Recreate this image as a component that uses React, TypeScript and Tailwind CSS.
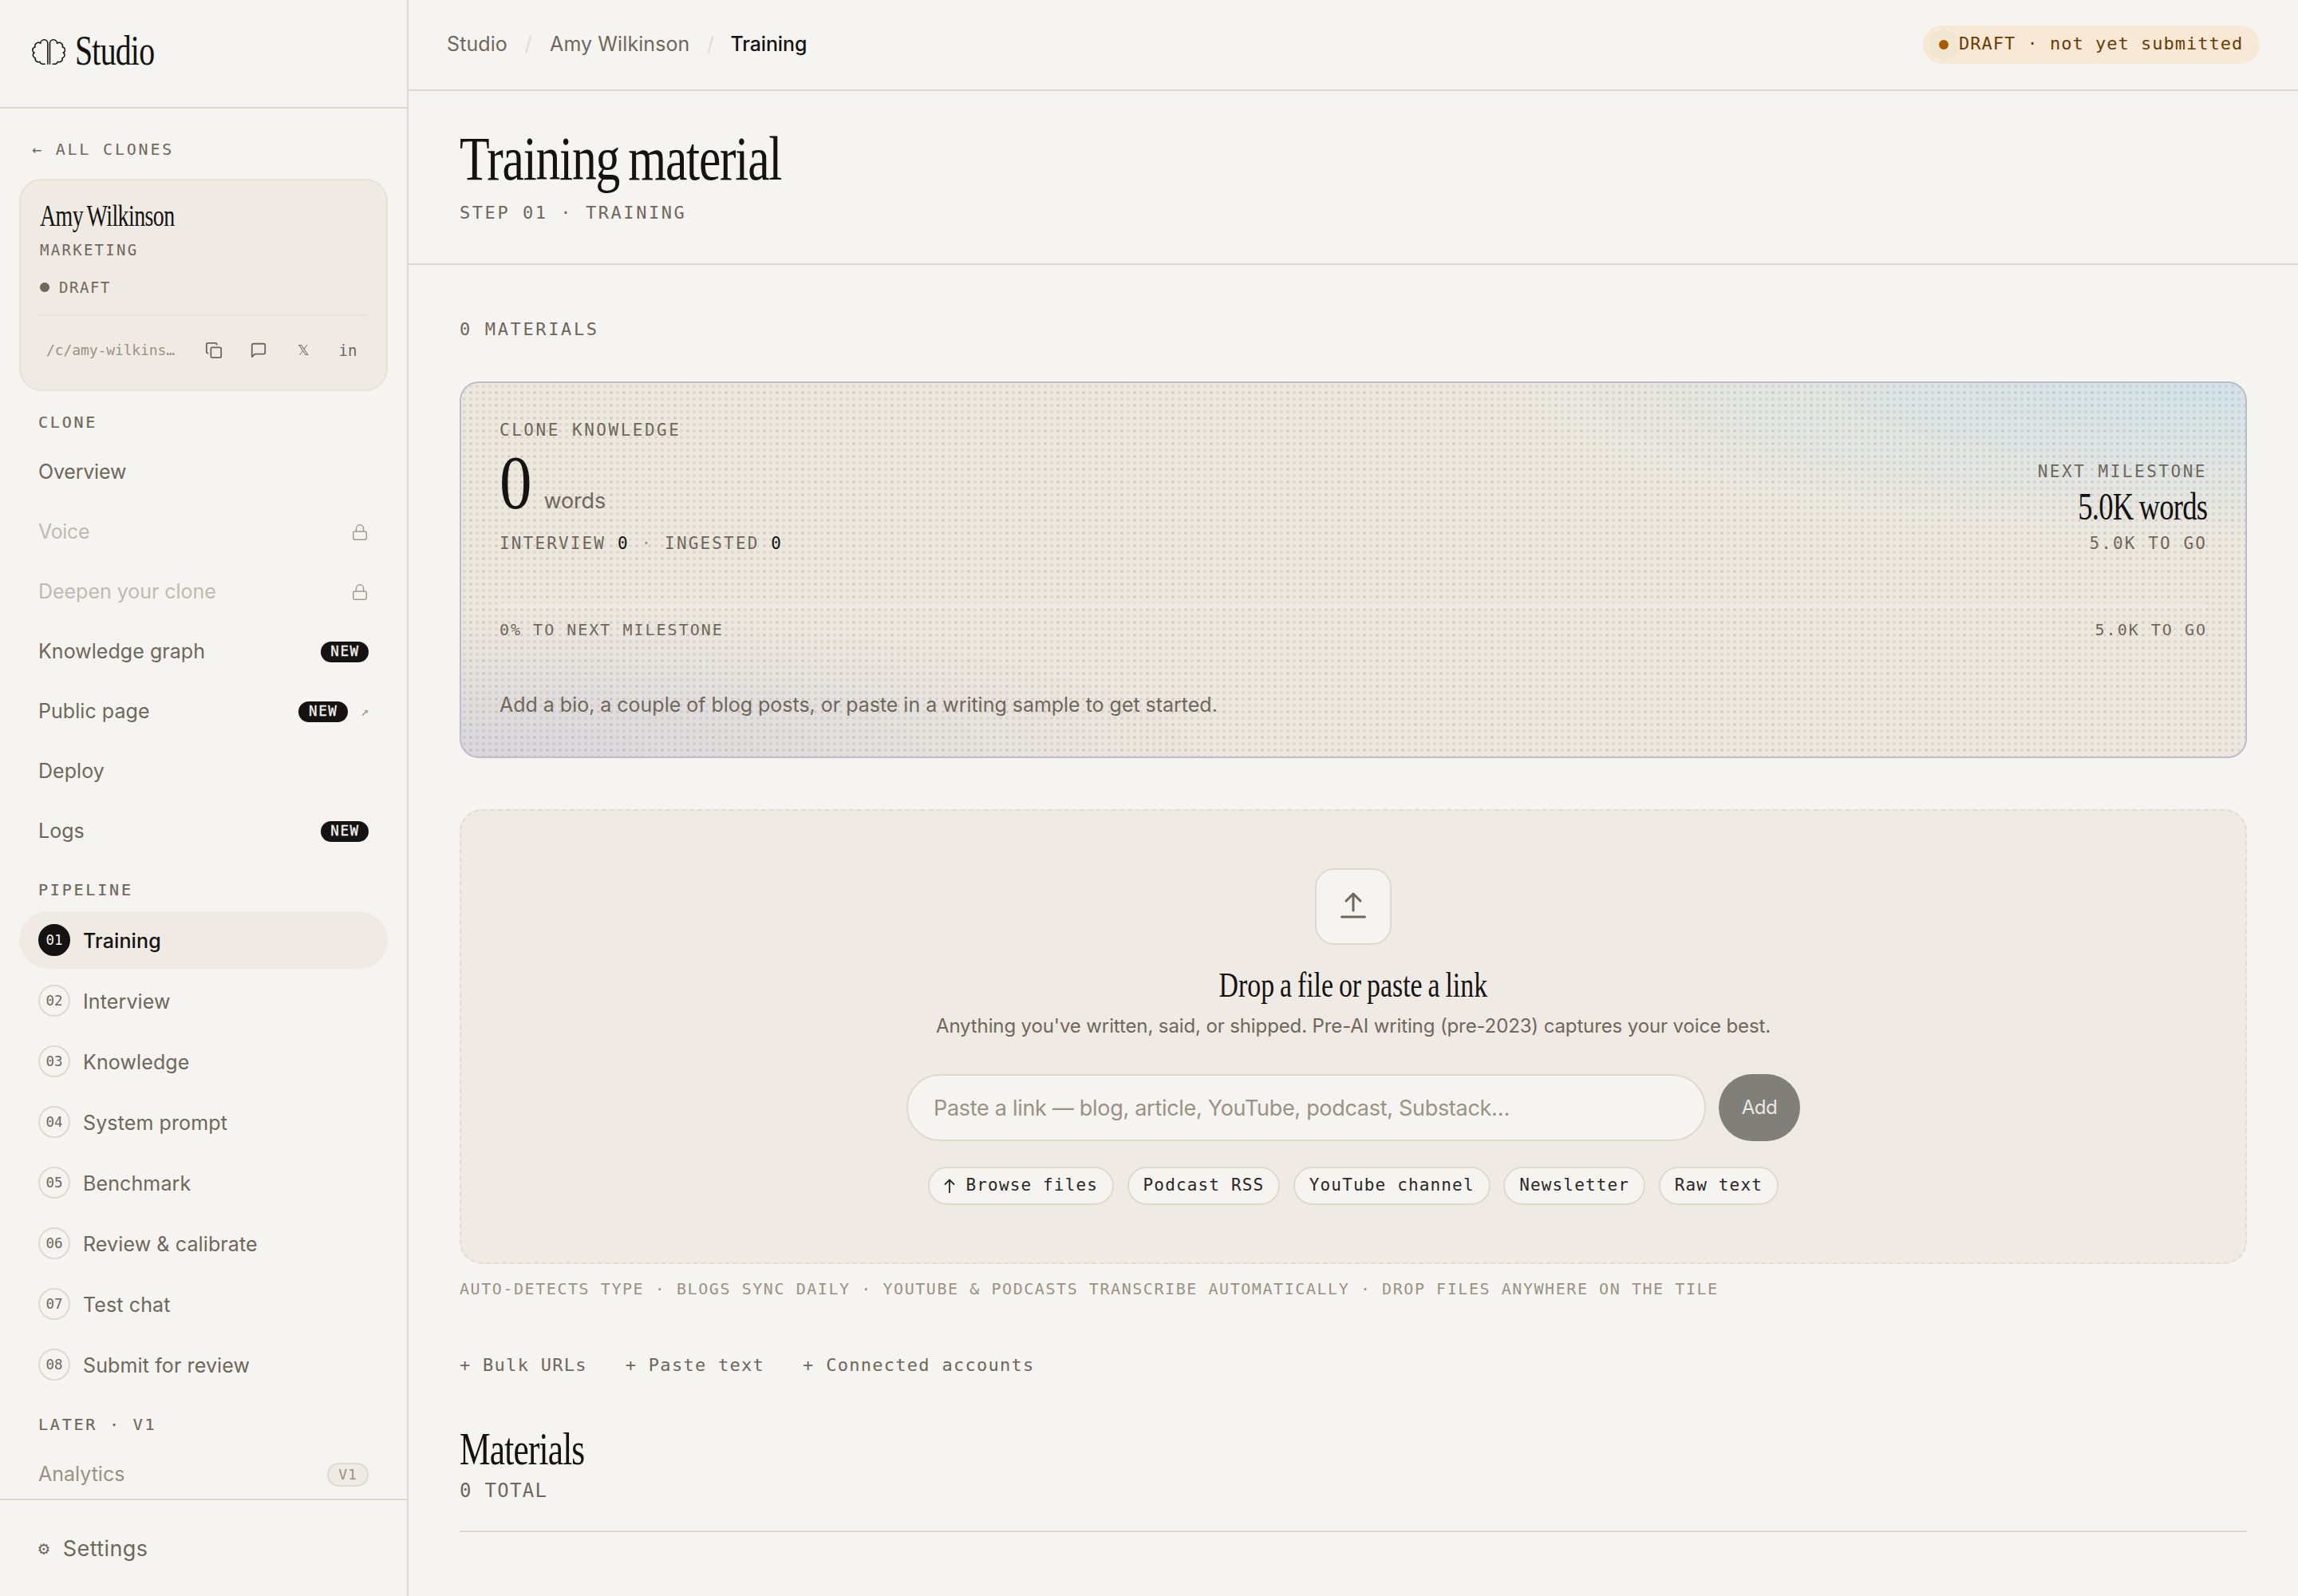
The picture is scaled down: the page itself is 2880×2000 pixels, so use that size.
import type { ReactNode } from 'react'
import clsx from 'clsx'
import { Copy, Lock } from 'lucide-react'

const mono = "font-['DejaVu_Sans_Mono','Liberation_Mono',monospace] whitespace-pre"
const serif = "font-['Liberation_Serif',serif] inline-block whitespace-nowrap text-[#141311]"

const CLONE_NAV = [
  { label: 'Overview', tracking: 'tracking-[-0.2px]' },
  { label: 'Voice', locked: true, tracking: 'tracking-[-0.3px]' },
  { label: 'Deepen your clone', locked: true, tracking: 'tracking-[-0.03px]' },
  { label: 'Knowledge graph', isNew: true },
  { label: 'Public page', isNew: true, external: true },
  { label: 'Deploy' },
  { label: 'Logs', isNew: true },
]

const PIPELINE = [
  'Training',
  'Interview',
  'Knowledge',
  'System prompt',
  'Benchmark',
  'Review & calibrate',
  'Test chat',
  'Submit for review',
]

const SOURCES = ['Browse files', 'Podcast RSS', 'YouTube channel', 'Newsletter', 'Raw text']

export default function App() {
  return (
    <div className="flex h-[2000px] w-[2880px] overflow-hidden bg-[#f6f4f0] font-['Inter',sans-serif] text-[#6e675b]">
      <Sidebar />
      <main className="flex w-[2368px] flex-col">
        <TopBar />
        <header className="h-[218px] border-b-2 border-[#dfd9cf] px-16 pt-[45px]">
          <h1 className="h-20 leading-[80px]">
            <span className={clsx(serif, 'origin-left scale-x-[.780] text-[79px] tracking-[-.02em] [word-spacing:-4px]')}>Training material</span>
          </h1>
          <p className={clsx(mono, 'mt-[14px] text-[22px] leading-7 tracking-[2.550px]')}>STEP 01 · TRAINING</p>
        </header>
        <div className="px-16 pt-[67px]">
          <p className={clsx(mono, 'text-[22px] leading-7 tracking-[.12em]')}>0 MATERIALS</p>
          <KnowledgeCard />
          <DropZone />
          <p className={clsx(mono, 'mt-[19px] text-[20px] leading-6 tracking-[1.560px] text-[#9a9284]')}>
            AUTO-DETECTS TYPE · BLOGS SYNC DAILY · YOUTUBE &amp; PODCASTS TRANSCRIBE AUTOMATICALLY · DROP FILES ANYWHERE ON THE TILE
          </p>
          <div className={clsx(mono, 'mt-[70px] flex gap-12 text-[22px] leading-7 tracking-[1.280px]')}>
            <span>+ Bulk URLs</span>
            <span>+ Paste text</span>
            <span>+ Connected accounts</span>
          </div>
          <div className="mt-[61px] border-b-2 border-[#dfd9cf] pb-[35px]">
            <h2 className="h-[60px] leading-[60px]">
              <span className={clsx(serif, 'origin-left scale-x-[.763] text-[57px] tracking-[-.02em]')}>Materials</span>
            </h2>
            <p className={clsx(mono, 'mt-[7px] text-[24px] leading-[30px] tracking-[1.300px]')}>0 TOTAL</p>
          </div>
        </div>
      </main>
    </div>
  )
}

function Sidebar() {
  return (
    <aside className="flex h-[2000px] w-[512px] flex-col border-r-2 border-[#dfd9cf]">
      <div className="flex h-[136px] shrink-0 items-center border-b-2 border-[#dfd9cf] pb-2 pl-10">
        <BrainLogo />
        <span className={clsx(serif, 'ml-3 origin-left scale-x-[.766] pt-px text-[52px] leading-[52px] tracking-[-.02em]')}>Studio</span>
      </div>

      <div className="flex-1 overflow-hidden px-6">
        <p className={clsx(mono, 'mt-[39px] pl-4 text-[20px] leading-6 tracking-[.14em]')}>← ALL CLONES</p>

        {/* Active clone */}
        <div className="mt-[25px] h-[266px] rounded-[28px] border-2 border-[#e9e3d7] bg-[#efeae3] px-6 pt-6">
          <div className="h-10 leading-[40px]">
            <span className={clsx(serif, 'origin-left scale-x-[.734] text-[38px] tracking-[-.02em] [word-spacing:-2px]')}>Amy Wilkinson</span>
          </div>
          <p className={clsx(mono, 'mt-[11px] text-[19px] leading-6 tracking-[.12em]')}>MARKETING</p>
          <div className={clsx(mono, 'mt-[23px] flex items-center gap-3 text-[19px] leading-6 tracking-[.08em]')}>
            <span className="size-3 rounded-full bg-[#6e675b]" />
            DRAFT
          </div>
          <div className="mt-[22px] flex items-center border-t-2 border-[#e9e3d7] pt-[22px] pr-1 pl-2">
            <span className={clsx(mono, 'flex-1 text-[18px] tracking-[-0.1px] text-[#9a9284]')}>/c/amy-wilkins…</span>
            <div className="flex h-10 items-center gap-4">
              <IconSlot><Copy size={22} strokeWidth={2} /></IconSlot>
              <IconSlot>
                <svg viewBox="0 0 24 24" className="size-[22px]" fill="none" stroke="currentColor" strokeWidth="2" strokeLinejoin="round">
                  <path d="M21 15a2 2 0 0 1-2 2H7l-4 4V5a2 2 0 0 1 2-2h14a2 2 0 0 1 2 2z" />
                </svg>
              </IconSlot>
              <IconSlot><span className={clsx(mono, 'text-[18px] leading-6')}>𝕏</span></IconSlot>
              <IconSlot><span className={clsx(mono, 'text-[19px] leading-6')}>in</span></IconSlot>
            </div>
          </div>
        </div>

        <SectionLabel className="mt-[27px]">CLONE</SectionLabel>
        <nav className="mt-[13px]">
          {CLONE_NAV.map((item) => (
            <div key={item.label} className="flex h-[75px] items-center px-6 text-[25px]">
              <span className={clsx('flex-1', item.tracking ?? 'tracking-[0.05px]', item.locked && 'text-[#bfbbb1]')}>{item.label}</span>
              {item.locked && <Lock size={22} strokeWidth={1.6} className="text-[#a39a8b]" />}
              {item.isNew && (
                <span
                  className={clsx(
                    mono,
                    'flex h-[26px] items-center justify-center rounded-full bg-[#141311] pb-px pl-px text-[17.500px] tracking-[.09em] text-[#f6f4f0] [-webkit-text-stroke:0.3px]',
                    item.external ? 'w-[62px]' : 'w-[60px]',
                  )}
                >
                  NEW
                </span>
              )}
              {item.external && <span className={clsx(mono, 'ml-4 text-[17px] text-[#9a9284]')}>↗</span>}
            </div>
          ))}
        </nav>

        <SectionLabel className="mt-6">PIPELINE</SectionLabel>
        <nav className="mt-[15px] flex flex-col gap-1">
          {PIPELINE.map((label, i) => {
            const active = i === 0
            return (
              <div
                key={label}
                className={clsx(
                  'flex h-[72px] items-center gap-4 rounded-full px-6 text-[25px] tracking-[0.12px]',
                  active && 'bg-[#efeae3] font-medium text-[#141311]',
                )}
              >
                <span
                  className={clsx(
                    mono,
                    'flex size-10 items-center justify-center rounded-full border-2 text-[17.5px] font-normal tracking-normal',
                    active ? 'border-[#141311] bg-[#141311] text-[#f6f4f0]' : 'border-[#dfd9cf]',
                  )}
                >
                  0{i + 1}
                </span>
                <span className="pt-[3px]">{label}</span>
              </div>
            )
          })}
        </nav>

        <SectionLabel className="mt-[27px]">LATER · V1</SectionLabel>
        <div className="mt-[14px] flex h-[67px] items-center px-6 pt-1.5 text-[25px] text-[#9a9284]">
          <span className="flex-1">Analytics</span>
          <span className={clsx(mono, 'flex h-[30px] w-[52px] items-center justify-center rounded-full border-2 border-[#dfd9cf] bg-[#efeae3] pb-px text-[18px] tracking-[.05em]')}>
            V1
          </span>
        </div>
      </div>

      <div className="flex h-[122px] shrink-0 items-center border-t-2 border-[#dfd9cf] pl-12">
        <span className={clsx(mono, 'text-[23px]')}>⚙</span>
        <span className="ml-[17px] pt-0.5 text-[27px] tracking-[.4px]">Settings</span>
      </div>
    </aside>
  )
}

function SectionLabel({ className, children }: { className: string; children: ReactNode }) {
  return (
    <p className={clsx(mono, 'pl-6 text-[20px] leading-6 tracking-[.14em] [-webkit-text-stroke:0.2px]', className)}>
      {children}
    </p>
  )
}

function IconSlot({ children }: { children: ReactNode }) {
  return <span className="flex size-10 items-center justify-center pt-px">{children}</span>
}

function BrainLogo() {
  // one hemisphere, mirrored for the other
  const half =
    'M89.500 131V52A13.500 13.500 0 0 0 62.500 52A13 13 0 0 0 42 66A11 11 0 0 0 39 87A11 11 0 0 0 43 107A12 12 0 0 0 60 121Q62 129 70 130H80'
  return (
    <svg viewBox="30 36 126 96" className="mt-[3px] h-8 w-[42px] shrink-0" fill="none" stroke="#141311" strokeWidth="4.600" strokeLinejoin="round">
      <path d={half} />
      <path d={half} transform="translate(187 0) scale(-1 1)" />
    </svg>
  )
}

function TopBar() {
  return (
    <div className="flex h-[114px] items-center justify-between border-b-2 border-[#dfd9cf] px-12">
      <div className="flex items-center gap-[21.500px] text-[25px] tracking-[0.1px]">
        <span>Studio</span>
        <span className="text-[#e3ddd1]">/</span>
        <span className="pl-px">Amy Wilkinson</span>
        <span className="text-[#e3ddd1]">/</span>
        <span className="-ml-px font-medium tracking-[-0.15px] text-[#141311]">Training</span>
      </div>
      <div className="flex h-12 w-[422px] items-center rounded-full bg-[#f8e8d6] pl-5">
        <span className="size-3 rounded-full bg-[#a85b00] ring-12 ring-[#f0e6d2]" />
        <span className={clsx(mono, 'relative ml-[13px] pb-[3px] text-[22px] tracking-[1px] text-[#6b3c00]')}>DRAFT · not yet submitted</span>
      </div>
    </div>
  )
}

function KnowledgeCard() {
  return (
    <section className="relative mt-[51px] h-[472px] overflow-hidden rounded-3xl border-2 border-[#bdbccb] bg-[#ede8de] bg-[radial-gradient(ellipse_60%_60%_at_100%_0%,#d2e2e8,transparent_72%),radial-gradient(ellipse_60%_55%_at_0%_100%,#d9d6dc,transparent_72%)] px-12 pt-[47px]">
      {/* Dot texture: fine 8px grid with a stronger 16px grid over it */}
      <div className="absolute inset-0 bg-[radial-gradient(circle,rgb(20_19_17/0.08)_1.500px,transparent_2.200px)] bg-[size:8px_8px]" />
      <div className="absolute inset-0 bg-[radial-gradient(circle_at_12px_12px,rgb(20_19_17/0.04)_1.500px,transparent_2.200px)] bg-[size:16px_16px]" />

      <div className="relative">
        <div className="flex items-end justify-between">
          <div>
            <p className={clsx(mono, 'text-[21px] leading-6 tracking-[.12em]')}>CLONE KNOWLEDGE</p>
            <div className="mt-[6px] flex h-[95px] items-baseline">
              <span className={clsx(serif, 'origin-left scale-x-[.854] text-[95px] leading-[96px]')}>0</span>
              <span className="ml-2 text-[27px] leading-8 tracking-[-0.15px]">words</span>
            </div>
            <p className={clsx(mono, 'mt-[17px] text-[21px] leading-6 tracking-[2.150px]')}>
              INTERVIEW <span className="text-[#141311]">0</span> <span className="text-[#9a9284]">·</span> INGESTED{' '}
              <span className="text-[#141311]">0</span>
            </p>
          </div>
          <div className="text-right">
            <p className={clsx(mono, 'text-[21px] leading-6 tracking-[.12em]')}>NEXT MILESTONE</p>
            <div className="mt-2 h-12 leading-[48px]">
              <span className={clsx(serif, 'origin-right scale-x-[.764] text-[48px] tracking-[-.02em] [word-spacing:-2px]')}>5.0K words</span>
            </div>
            <p className={clsx(mono, 'mt-[10px] text-[21px] leading-6 tracking-[.1em]')}>5.0K TO GO</p>
          </div>
        </div>
        <div className="mt-[63px] h-1.5 rounded-full bg-[#efeae3]/80" />
        <div className={clsx(mono, 'mt-[15px] flex justify-between text-[20px] leading-6 tracking-[.1em]')}>
          <span>0% TO NEXT MILESTONE</span>
          <span>5.0K TO GO</span>
        </div>
        <p className="mt-[66px] text-[25px] leading-8 tracking-[-0.02px]">
          Add a bio, a couple of blog posts, or paste in a writing sample to get started.
        </p>
      </div>
    </section>
  )
}

function DropZone() {
  return (
    <section className="mt-16 flex h-[570px] flex-col items-center rounded-[28px] border-2 border-dashed border-[#e3dcd0] bg-[#efeae3] pt-[72px]">
      <div className="flex size-24 items-center justify-center rounded-3xl border-2 border-[#dfdace] bg-[#f6f4f0]">
        <svg viewBox="0 0 48 48" className="size-12" fill="none" stroke="#6e675b" strokeWidth="3" strokeLinecap="round" strokeLinejoin="round">
          <path d="M24 29V8M15 17l9-9 9 9M9.500 37h29" />
        </svg>
      </div>
      <h2 className="mt-[27px] h-12 leading-[48px]">
        <span className={clsx(serif, 'scale-x-[.769] text-[44px] [word-spacing:-2px]')}>Drop a file or paste a link</span>
      </h2>
      <p className="mt-[11px] text-[24px] leading-8 tracking-[-0.12px]">
        Anything you've written, said, or shipped. Pre-AI writing (pre-2023) captures your voice best.
      </p>
      <div className="mt-[44px] flex h-[84px] w-[1120px] gap-4">
        <div className="flex flex-1 items-center rounded-full border-2 border-[#dfdace] bg-[#f6f4f0] pt-0.5 pl-8 text-[27px] tracking-[-0.3px] text-[#9a9284]">
          Paste a link — blog, article, YouTube, podcast, Substack…
        </div>
        <button className="w-[102px] rounded-full bg-[#807f7a] text-[24px] tracking-[-0.5px] text-[#ebe8e2]">Add</button>
      </div>
      <div className="mt-8 flex gap-[16.500px]">
        {SOURCES.map((source, i) => (
          <button
            key={source}
            className={clsx(
              mono,
              'flex h-12 items-center rounded-full border-2 border-[#dfdace] bg-[#f6f4f0] px-[18px] text-[21px] tracking-[1.150px] text-[#2a2825]',
            )}
          >
            {i === 0 && (
              <svg viewBox="0 0 14 18" className="mr-[13.500px] h-[18px] w-[14px] shrink-0" fill="none" stroke="currentColor" strokeWidth="1.800">
                <path d="M7 18V1.500M1 7.500l6-6 6 6" />
              </svg>
            )}
            {source}
          </button>
        ))}
      </div>
    </section>
  )
}
